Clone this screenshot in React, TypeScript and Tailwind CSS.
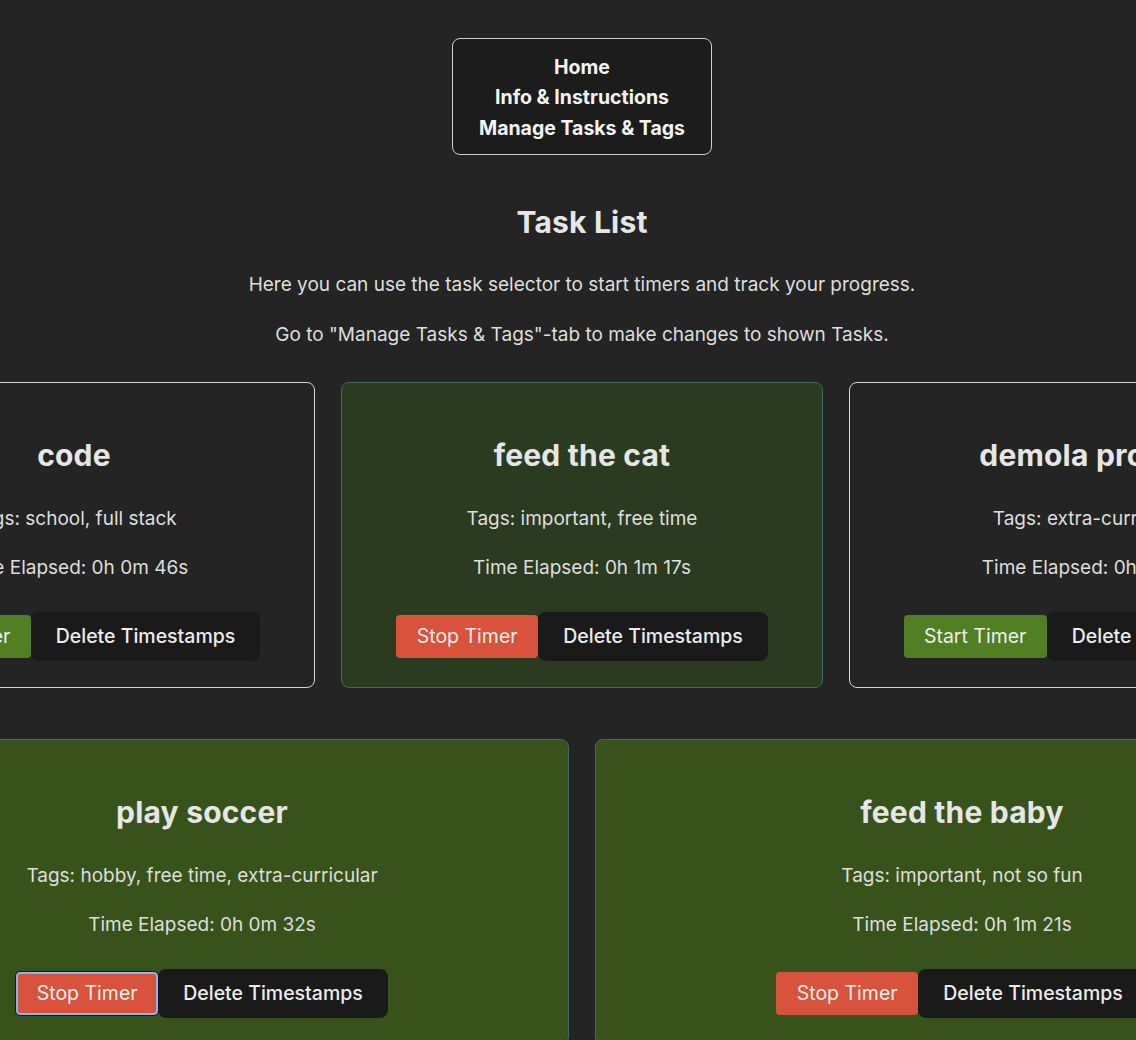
import React from "react";

type Task = {
  name: string;
  tags: string;
  time: string;
  running: boolean;
  variant: "idle" | "active" | "green";
  focus?: boolean;
};

const row1: Task[] = [
  { name: "code", tags: "school, full stack", time: "0h 0m 46s", running: false, variant: "idle" },
  { name: "feed the cat", tags: "important, free time", time: "0h 1m 17s", running: true, variant: "active" },
  { name: "demola project", tags: "extra-curricular", time: "0h 0m 0s", running: false, variant: "idle" },
];
const row2: Task[] = [
  { name: "play soccer", tags: "hobby, free time, extra-curricular", time: "0h 0m 32s", running: true, variant: "green", focus: true },
  { name: "feed the baby", tags: "important, not so fun", time: "0h 1m 21s", running: true, variant: "green" },
];

function Card({ t, wide }: { t: Task; wide?: boolean }) {
  const cls =
    t.variant === "idle"
      ? "bg-[#242424] border-[#d4d4d4]"
      : t.variant === "active"
      ? "bg-[#2b3b1f] border-[#3e6b5e]"
      : "bg-[#37531b] border-[#3e6b5e]";
  return (
    <div
      className={`${wide ? "w-[734px]" : "w-[482px]"} shrink-0 rounded-[8px] border-[1.5px] ${cls} flex flex-col items-center pt-[55px] pb-[26px] text-center`}
    >
      <h2 className="text-[30px] leading-[34px] font-bold tracking-[0.2px] text-[#e6e6e6]">{t.name}</h2>
      <p className="mt-[33px] text-[19px] leading-[28px] text-[#dedede]">Tags: {t.tags}</p>
      <p className="mt-[21px] text-[19px] leading-[28px] text-[#dedede]">Time Elapsed: {t.time}</p>
      <div className="mt-[30px] flex items-center">
        {t.running ? (
          <button
            className={`h-[43px] w-[142px] rounded-[4px] bg-[#d9523c] text-[19.5px] text-[#f0f0f0] ${
              t.focus ? "border-2 border-[#8ab4f8] outline outline-1 outline-[#1a1a1a]" : ""
            }`}
          >
            Stop Timer
          </button>
        ) : (
          <button className="h-[43px] w-[143px] rounded-[4px] bg-[#517f24] text-[19.5px] text-[#f0f0f0]">
            Start Timer
          </button>
        )}
        <button className="h-[49px] rounded-[8px] bg-[#1a1a1a] px-[25px] text-[19.5px] font-medium text-[#ececec]">
          Delete Timestamps
        </button>
      </div>
    </div>
  );
}

export default function App() {
  return (
    <div
      className="min-h-screen w-full overflow-hidden bg-[#242424] text-[#dedede]"
      style={{ fontFamily: "Inter, 'Noto Sans', sans-serif" }}
    >
      <div className="flex w-[1164px] flex-col items-center pt-[38px] pb-[40px]">
        <nav className="flex h-[117px] flex-col items-center justify-center rounded-[8px] border-[1.5px] border-[#d0d0d0] bg-[#1c1c1c] px-[26px] pt-[2px] text-[19.5px] font-bold leading-[30.5px] text-[#f4f4f4]">
          <span>Home</span>
          <span>Info &amp; Instructions</span>
          <span>Manage Tasks &amp; Tags</span>
        </nav>
        <h1 className="mt-[50px] text-[30px] leading-[34px] font-bold tracking-[0.2px] text-[#e6e6e6]">Task List</h1>
        <p className="mt-[32px] text-[19px] leading-[28px]">
          Here you can use the task selector to start timers and track your progress.
        </p>
        <p className="mt-[22px] text-[19px] leading-[28px]">
          Go to "Manage Tasks &amp; Tags"-tab to make changes to shown Tasks.
        </p>
        <div className="mt-[33px] flex w-full justify-center">
          <div className="flex shrink-0 gap-[26px]">
            {row1.map((t) => (
              <Card key={t.name} t={t} />
            ))}
          </div>
        </div>
        <div className="mt-[51px] flex w-full justify-center">
          <div className="flex shrink-0 gap-[26px]">
            {row2.map((t) => (
              <Card key={t.name} t={t} wide />
            ))}
          </div>
        </div>
      </div>
    </div>
  );
}
